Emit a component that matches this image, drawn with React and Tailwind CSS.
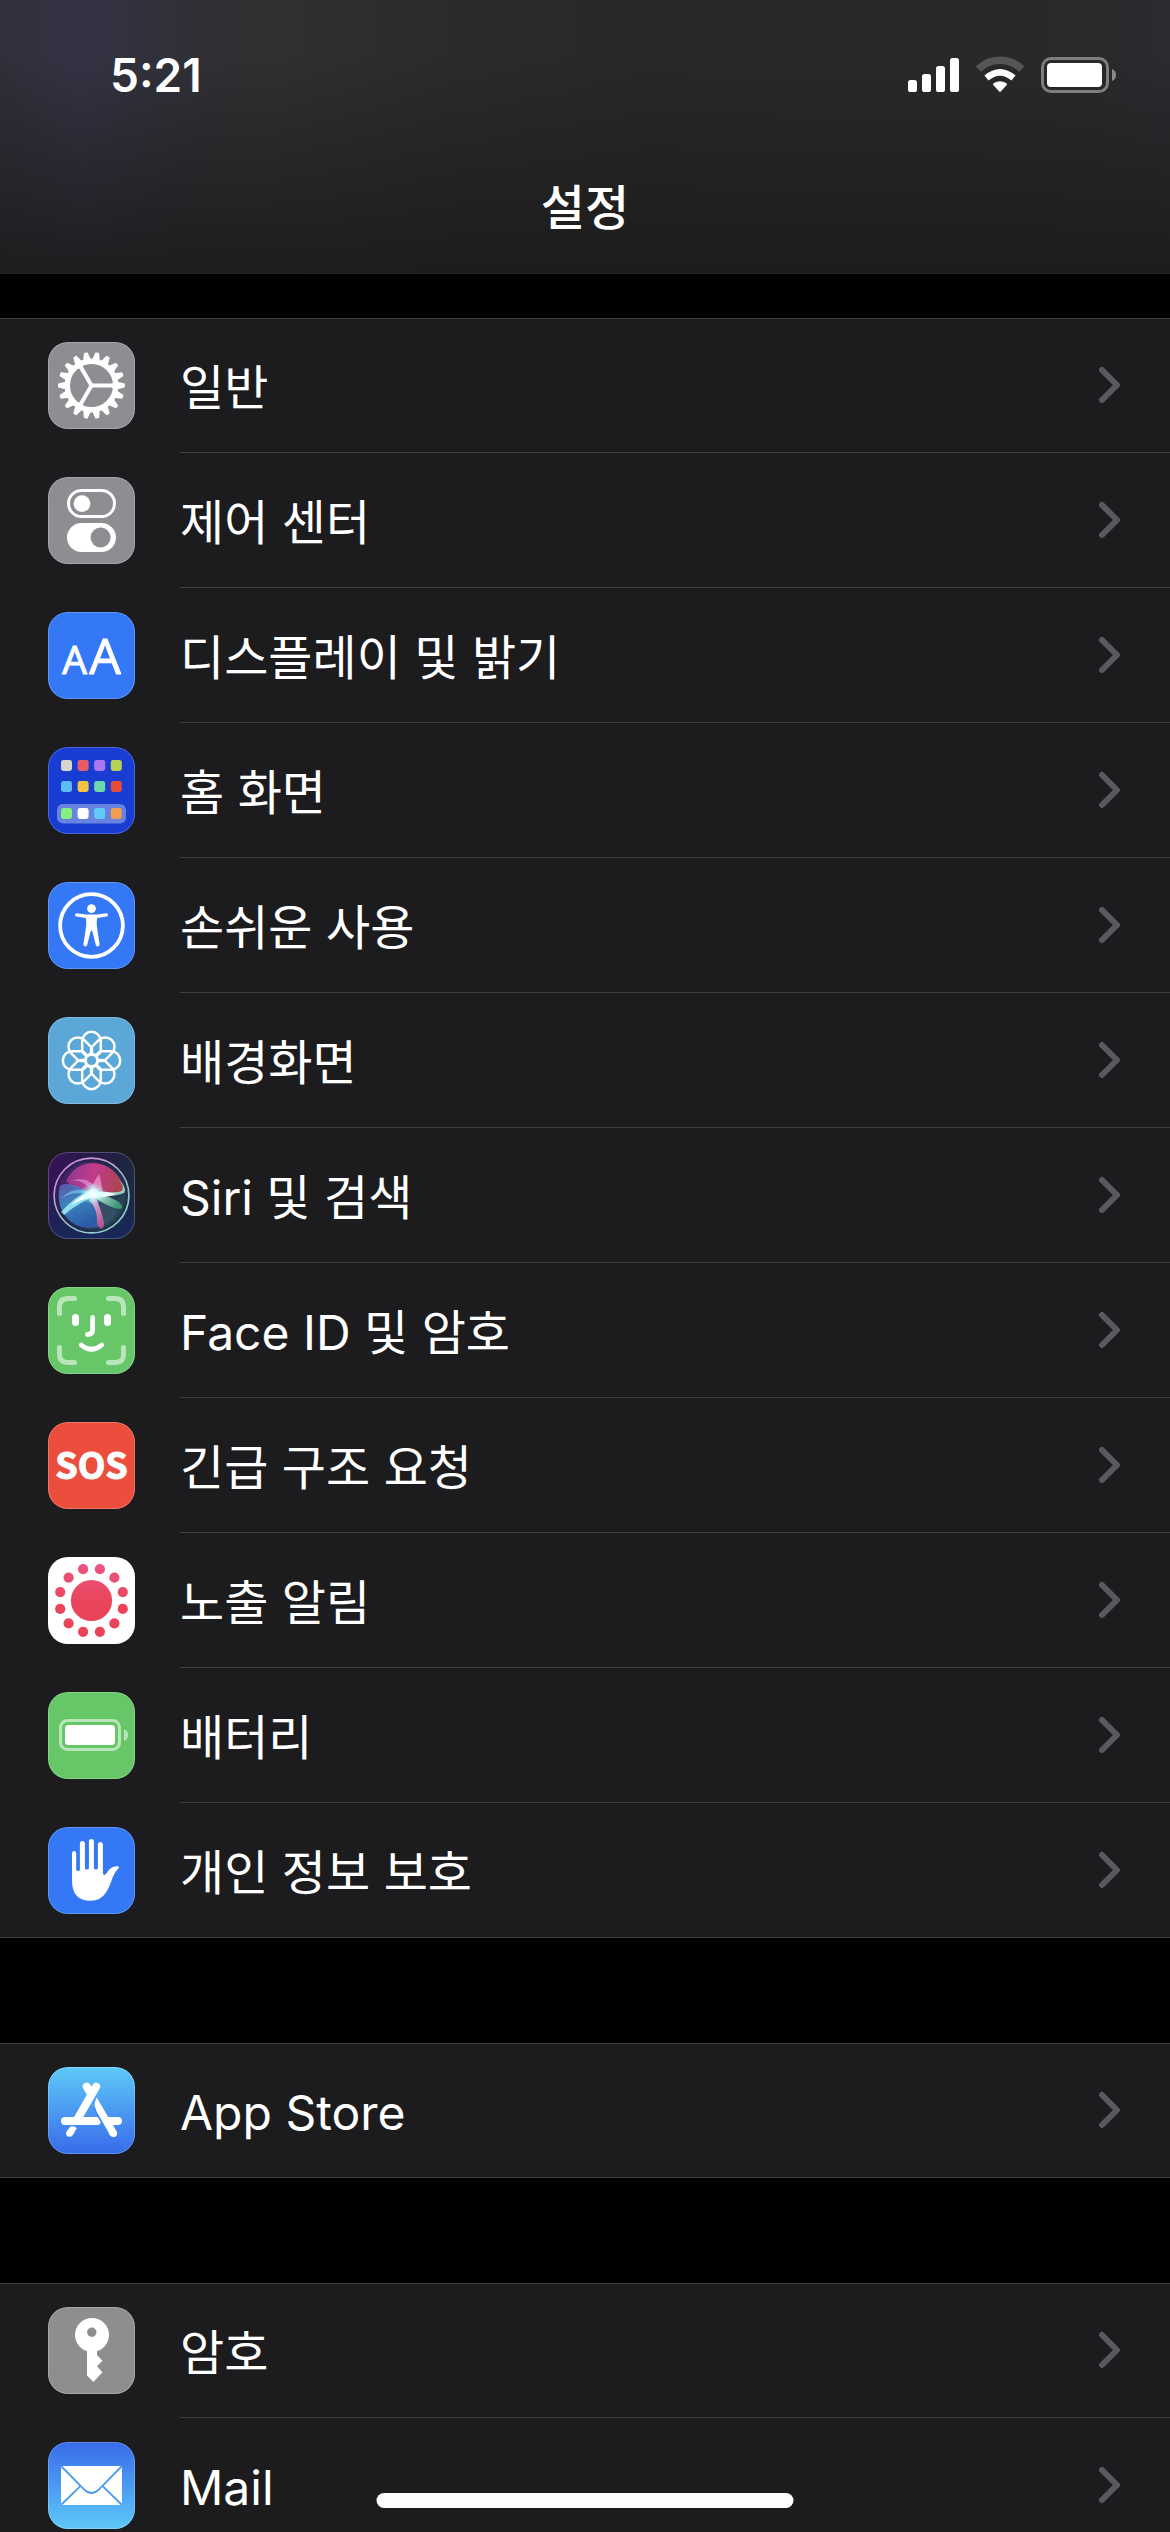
import { useId } from 'react'

// ── Icon artwork (all drawn on an 87 × 87 tile) ────────────────────────────

const TEETH = Array.from({ length: 18 }, (_, i) => i * 20)
const PETALS = Array.from({ length: 8 }, (_, i) => i * 45)
const DOTS = Array.from({ length: 12 }, (_, i) => 15 + i * 30)

function Tile({ from, to = from, children }) {
  const id = useId()
  return (
    <svg viewBox="0 0 87 87" className="size-[87px] shrink-0" aria-hidden="true">
      <defs>
        <linearGradient id={id} x1="0" y1="0" x2="0" y2="1">
          <stop offset="0" stopColor={from} />
          <stop offset="1" stopColor={to} />
        </linearGradient>
      </defs>
      <rect width="87" height="87" rx="20" fill={`url(#${id})`} />
      {children}
      <rect x="0.5" y="0.5" width="86" height="86" rx="19.5" fill="none" stroke="#fff" strokeOpacity="0.22" />
    </svg>
  )
}

function GeneralIcon() {
  return (
    <Tile from="#8e8d92">
      <g transform="translate(43.5 43.5)">
        <circle r="24.2" fill="none" stroke="#fff" strokeWidth="5.4" />
        {TEETH.map(a => (
          <path key={a} d="M25-4L33.2-1.9Q33.8 0 33.2 1.9L25 4z" fill="#fff" transform={`rotate(${a})`} />
        ))}
        {[0, 120, 240].map(a => (
          <path key={a} d="M-2-2H20Q22-2.4 24-5V5Q22 2.4 20 2H-1z" fill="#fff" transform={`rotate(${a})`} />
        ))}
      </g>
    </Tile>
  )
}

function ControlCenterIcon() {
  return (
    <Tile from="#8e8d92">
      <rect x="20.5" y="13.5" width="46" height="26" rx="13" fill="none" stroke="#fff" strokeWidth="3" />
      <circle cx="34" cy="26.6" r="8.4" fill="#fff" />
      <rect x="19" y="46" width="49" height="29" rx="14.5" fill="#fff" />
      <circle cx="52.6" cy="60.5" r="10" fill="#8e8d92" />
    </Tile>
  )
}

function DisplayIcon() {
  return (
    <Tile from="#3478f6">
      <g
        fill="#fff"
        stroke="#fff"
        strokeWidth="1"
        strokeLinejoin="round"
        fontFamily="'Open Sans', sans-serif"
        textAnchor="middle"
      >
        <text x="26.5" y="61.5" fontSize="39">A</text>
        <text x="57" y="61.5" fontSize="50">A</text>
      </g>
    </Tile>
  )
}

function HomeScreenIcon() {
  const rows = [
    [13, ['#d6d6ce', '#ea5b68', '#ad76f3', '#b8d353']],
    [34, ['#5dbcf7', '#f6c445', '#70d6ab', '#e54c3c']],
    [61, ['#89ef82', '#ffffff', '#60cafa', '#f09e54']],
  ]
  return (
    <Tile from="#193dd3">
      <rect x="9" y="57" width="69" height="19.5" rx="6" fill="#6683e0" />
      {rows.map(([y, colors]) =>
        colors.map((c, i) => <rect key={c} x={13 + i * 16.6} y={y} width="11" height="11" rx="2.4" fill={c} />)
      )}
    </Tile>
  )
}

function AccessibilityIcon() {
  return (
    <Tile from="#3478f6">
      <circle cx="43.5" cy="43.5" r="31.4" fill="none" stroke="#fff" strokeWidth="3.8" />
      <circle cx="43.5" cy="26.6" r="4.4" fill="#fff" />
      <path
        d="M28.6 31.2L38 32.6H49L58.4 31.2Q60 31.4 60 33Q60 34.2 58.6 34.5L49.2 36Q48.6 38 48.8 43Q49.2 48 51.6 62Q51.8 64 50 64.4Q48.4 64.6 47.8 63L44.4 49.5Q43.5 47.5 42.6 49.5L39.2 63Q38.6 64.6 37 64.4Q35.2 64 35.4 62Q37.8 48 38.2 43Q38.4 38 37.8 36L28.4 34.5Q27 34.2 27 33Q27 31.4 28.6 31.2z"
        fill="#fff"
      />
    </Tile>
  )
}

function WallpaperIcon() {
  return (
    <Tile from="#5ba8d8">
      <g transform="translate(43.5 43.5)" fill="none" stroke="#fff" strokeWidth="2.5">
        {PETALS.map(a => (
          <path key={a} d="M0 0L-9.3-9.5V-19.4A9.3 9.3 0 0 1 9.3-19.4V-9.5z" transform={`rotate(${a})`} />
        ))}
        {PETALS.map(a => (
          <path key={a} d="M0-5V-12" strokeWidth="3.4" transform={`rotate(${a})`} />
        ))}
        <circle r="6.2" strokeWidth="3" />
        <circle r="4.6" fill="#5ba8d8" stroke="none" />
      </g>
    </Tile>
  )
}

function SiriIcon() {
  const id = useId()
  const ref = name => `url(#${id}${name})`
  return (
    <svg viewBox="0 0 87 87" className="size-[87px] shrink-0" aria-hidden="true">
      <defs>
        <linearGradient id={`${id}bg`} x1="0" y1="0" x2="1" y2="0.25">
          <stop offset="0" stopColor="#38125a" />
          <stop offset="0.55" stopColor="#251b45" />
          <stop offset="1" stopColor="#1c2940" />
        </linearGradient>
        <linearGradient id={`${id}low`} x1="0" y1="0" x2="0" y2="1">
          <stop offset="0.4" stopColor="#18245c" stopOpacity="0" />
          <stop offset="1" stopColor="#18285a" />
        </linearGradient>
        <linearGradient id={`${id}ring`} x1="0.2" y1="0" x2="0.8" y2="1">
          <stop offset="0" stopColor="#d08ad6" />
          <stop offset="0.5" stopColor="#a3b8c8" />
          <stop offset="1" stopColor="#8fdad0" />
        </linearGradient>
        <linearGradient id={`${id}glass`} x1="0" y1="0.1" x2="1" y2="0.8">
          <stop offset="0" stopColor="#5a2272" />
          <stop offset="0.5" stopColor="#2b3560" />
          <stop offset="1" stopColor="#2c5a55" />
        </linearGradient>
        <linearGradient id={`${id}dome`} x1="0" y1="0.3" x2="1" y2="0.5">
          <stop offset="0" stopColor="#8f3a94" />
          <stop offset="0.45" stopColor="#cf3c8e" />
          <stop offset="1" stopColor="#b5464e" />
        </linearGradient>
        <linearGradient id={`${id}blue`} x1="0.2" y1="0" x2="0.6" y2="1">
          <stop offset="0" stopColor="#5d62b8" />
          <stop offset="0.4" stopColor="#3f93cf" />
          <stop offset="1" stopColor="#2c5fb4" />
        </linearGradient>
        <radialGradient id={`${id}glow`} cx="0.5" cy="0.5" r="0.5">
          <stop offset="0" stopColor="#fff" />
          <stop offset="0.35" stopColor="#dffcff" stopOpacity="0.85" />
          <stop offset="1" stopColor="#8fe" stopOpacity="0" />
        </radialGradient>
        <linearGradient id={`${id}green`} x1="0" y1="0" x2="1" y2="0.4">
          <stop offset="0" stopColor="#d8fff4" />
          <stop offset="1" stopColor="#3f9c78" />
        </linearGradient>
        <linearGradient id={`${id}tail`} x1="0" y1="0" x2="0.3" y2="1">
          <stop offset="0" stopColor="#ffe6fa" />
          <stop offset="1" stopColor="#d0549e" />
        </linearGradient>
      </defs>
      <rect width="87" height="87" rx="20" fill={ref('bg')} />
      <rect width="87" height="87" rx="20" fill={ref('low')} />
      <circle cx="43.5" cy="43.5" r="37.6" fill={ref('glass')} fillOpacity="0.75" />
      <path d="M18 29Q27 11 45 11Q64 12 73 29Q78 38 73 41L46 43Q29 40 18 29z" fill={ref('dome')} fillOpacity="0.92" />
      <path d="M12 34Q20 27 44 42Q51 58 50 75Q30 79 18 65Q8 52 12 34z" fill={ref('blue')} fillOpacity="0.85" />
      <path d="M46 43L72 50Q68 70 51 74Q52 58 46 43z" fill="#4a6b80" fillOpacity="0.35" />
      <path d="M46 41Q34 25 20 29Q30 26 38 28Q47 32 50 39z" fill="#e9b4ff" fillOpacity="0.5" />
      <path d="M44 43Q24 38 13 47Q25 32 46 41z" fill="#8fe0ff" fillOpacity="0.5" />
      <path d="M39 45Q44 32 51 22Q55 34 54 46z" fill="#f7a9e4" fillOpacity="0.6" />
      <path d="M48 38Q66 42 74 39Q77 34 70 27Q80 36 76 41Q64 46 48 43z" fill="#a8f0dc" fillOpacity="0.8" />
      <path d="M48 41Q62 44 72 51Q76 56 72 57Q64 57 47 46z" fill={ref('green')} fillOpacity="0.9" />
      <path d="M47 44Q53 56 56 71Q56 77 53 77Q48 74 49 65Q48 55 41 48z" fill={ref('tail')} fillOpacity="0.85" />
      <path d="M13 60Q26 45 45 36L52 43Q32 49 16 63z" fill="#9df0f4" fillOpacity="0.85" />
      <path d="M23 53Q33 43 46 37L52 43Q34 47 23 53z" fill="#fff" />
      <path d="M43 40Q58 39 68 42Q56 46 44 46z" fill="#fff" fillOpacity="0.9" />
      <ellipse cx="45" cy="41.5" rx="13" ry="11" fill={ref('glow')} />
      <circle cx="43.5" cy="43.5" r="35.2" fill="none" stroke="#161a3c" strokeOpacity="0.4" strokeWidth="2.6" />
      <circle cx="43.5" cy="43.5" r="37.4" fill="none" stroke={ref('ring')} strokeWidth="1.6" />
      <rect x="0.5" y="0.5" width="86" height="86" rx="19.5" fill="none" stroke="#fff" strokeOpacity="0.22" />
    </svg>
  )
}

function FaceIdIcon() {
  return (
    <Tile from="#67c667">
      <g fill="none" strokeLinecap="round" strokeLinejoin="round" strokeWidth="5">
        <path
          d="M11.5 26.5V20Q11.5 11.5 20 11.5H26.5M60.5 11.5H67Q75.5 11.5 75.5 20V26.5M75.5 60.5V67Q75.5 75.5 67 75.5H60.5M26.5 75.5H20Q11.5 75.5 11.5 67V60.5"
          stroke="#b9e5bb"
        />
        <path d="M44.6 30.5V43Q44.6 47.5 39.5 47.5" stroke="#fff" strokeWidth="4.8" />
        <path d="M33.2 58Q43.5 66.6 53.8 58" stroke="#fff" strokeWidth="4.8" />
      </g>
      <rect x="24" y="27" width="7" height="12" rx="3.5" fill="#fff" />
      <rect x="56" y="27" width="7" height="12" rx="3.5" fill="#fff" />
    </Tile>
  )
}

function SosIcon() {
  return (
    <Tile from="#eb4e3d">
      <text
        x="43.5"
        y="57"
        fontSize="36"
        fontWeight="700"
        fontFamily="'Noto Sans CJK KR', sans-serif"
        textAnchor="middle"
        fill="#fff"
        stroke="#fff"
        strokeWidth="1"
      >
        SOS
      </text>
    </Tile>
  )
}

function ExposureIcon() {
  const id = useId()
  return (
    <Tile from="#ffffff">
      <defs>
        <linearGradient id={id} gradientUnits="userSpaceOnUse" x1="0" y1="8" x2="0" y2="48">
          <stop offset="0" stopColor="#ea547f" />
          <stop offset="1" stopColor="#ea4459" />
        </linearGradient>
      </defs>
      <g fill={`url(#${id})`}>
        <circle cx="43.5" cy="43.5" r="20.6" />
        {DOTS.map(a => {
          const rad = (a * Math.PI) / 180
          return <circle key={a} cx={43.5 + 32.4 * Math.cos(rad)} cy={43.5 + 32.4 * Math.sin(rad)} r="5.1" />
        })}
      </g>
    </Tile>
  )
}

function BatteryIcon() {
  return (
    <Tile from="#67c667">
      <rect x="12.5" y="28.5" width="59" height="29" rx="7" fill="none" stroke="#b9e5bb" strokeWidth="3" />
      <rect x="17" y="33" width="50" height="20" rx="3.5" fill="#fff" />
      <path d="M76 37Q80 38.5 80 43T76 49z" fill="#b9e5bb" />
    </Tile>
  )
}

function PrivacyIcon() {
  return (
    <Tile from="#3478f6">
      <path
        d="M24 26.2A2.1 2.1 0 0 1 28.2 26.2V42.5Q28.2 44 30 44T31.9 42.5V16.6A2.5 2.5 0 0 1 36.9 16.6V41Q36.9 42.6 38.9 42.6T40.9 41V14.6A2.5 2.5 0 0 1 45.9 14.6V41Q45.9 42.6 47.9 42.6T49.9 41V17.5A2.5 2.5 0 0 1 54.9 17.5V46Q55.2 48.6 57.4 47.6Q58.6 46.6 60 44Q63.6 38.8 70 39.2Q71.8 39.6 70.6 41.2Q67.4 44 64.4 51Q61.6 60 58 65.5Q52.6 73.8 42.5 73.8Q24 73.8 24 53.5z"
        fill="#fff"
      />
    </Tile>
  )
}

function AppStoreIcon() {
  return (
    <Tile from="#5ec9f8" to="#386bea">
      <g stroke="#fff" strokeWidth="8" strokeLinecap="round" fill="none">
        <path d="M38.8 19.6L43 27" />
        <path d="M48.2 19.6L29.8 51.5" />
        <path d="M17 54H49" />
        <path d="M60 54H70" />
      </g>
      <path d="M48.8 30.6L69 65Q69.8 68.6 66.6 70Q63.4 70.6 61.6 68L47.6 43.6Q45.2 37.4 48.8 30.6z" fill="#fff" />
      <path d="M46.6 40.6Q47 43.4 48.4 46L60.5 67" fill="none" stroke="#448bf0" strokeWidth="1.6" />
      <path d="M22.4 59.6Q25.6 58.2 28.9 61L24.9 68Q22.9 70.8 19.7 69.4Q17 67.6 18.6 64.6z" fill="#fff" />
    </Tile>
  )
}

function PasswordsIcon() {
  return (
    <Tile from="#8e8e90">
      <circle cx="44" cy="28" r="17" fill="#fff" />
      <path d="M39 40H49V48L54.4 53.7L49 59.3L54.4 65.2L45.4 75L39 68.6z" fill="#fff" />
      <circle cx="43.8" cy="25.2" r="4.7" fill="#8e8e90" />
    </Tile>
  )
}

function MailIcon() {
  return (
    <Tile from="#386bea" to="#5ec9f8">
      <rect x="13" y="24" width="61" height="39" rx="1.5" fill="#fff" />
      <g fill="none" stroke="#4c9bf2" strokeWidth="1.8">
        <path d="M13.5 24.5L36 47.4Q43.5 54.6 51 47.4L73.5 24.5" />
        <path d="M13.5 62.5L32.6 43.8M73.5 62.5L54.4 43.8" />
      </g>
    </Tile>
  )
}

// ── Status bar ─────────────────────────────────────────────────────────────

function StatusIcons() {
  return (
    <svg viewBox="0 0 210 38" className="h-[38px] w-[210px]" role="img" aria-label="Signal, Wi-Fi, battery">
      <g fill="#fff">
        <rect x="2" y="24" width="9" height="12" rx="2.6" />
        <rect x="16" y="18" width="9" height="18" rx="2.6" />
        <rect x="30" y="10" width="9" height="26" rx="2.6" />
        <rect x="44" y="2" width="9" height="34" rx="2.6" />
        <path d="M94 36.2L87 28.8Q87 27.4 88.4 26.8Q94 23.6 99.6 26.8Q101 27.4 101 28.8z" />
        <path d="M78.4 19.6Q86 13 94 13T109.6 19.6L105.4 24.6Q99.8 19.8 94 19.8T82.6 24.6z" />
      </g>
      <path d="M69.6 10.6Q80 0.4 94 0.4T118.4 10.6L113.2 15.8Q105 8 94 8T75 15.8z" fill="#555" />
      <rect x="136.5" y="2.5" width="65" height="33" rx="8.5" fill="none" stroke="#7e7e7e" strokeWidth="3" />
      <rect x="141" y="7" width="55" height="24" rx="4" fill="#fff" />
      <path d="M206 13Q210 14.5 210 19T206 25z" fill="#8a8a8a" />
    </svg>
  )
}

function Header() {
  return (
    <header className="shrink-0 border-b border-[#262626] bg-[linear-gradient(to_bottom,transparent_20%,#1b1b1be6_100%),linear-gradient(to_right,#302f3a_0%,#343345_7%,#303038_15%,#303030_23%,#2b2b2b_38%,#282828_55%,#292929_90%,#2b2b30_100%)]">
      <div className="flex h-[150px] items-center justify-between pr-[54px] pl-[110px]">
        <time className="text-[46px] leading-none font-semibold">5:21</time>
        <StatusIcons />
      </div>
      <h1 className="flex h-[123px] items-center justify-center pb-2 text-5xl leading-none font-medium">설정</h1>
    </header>
  )
}

// ── Settings list ──────────────────────────────────────────────────────────

const groups = [
  [
    { label: '일반', Icon: GeneralIcon },
    { label: '제어 센터', Icon: ControlCenterIcon },
    { label: '디스플레이 및 밝기', Icon: DisplayIcon },
    { label: '홈 화면', Icon: HomeScreenIcon },
    { label: '손쉬운 사용', Icon: AccessibilityIcon },
    { label: '배경화면', Icon: WallpaperIcon },
    { label: 'Siri 및 검색', Icon: SiriIcon },
    { label: 'Face ID 및 암호', Icon: FaceIdIcon },
    { label: '긴급 구조 요청', Icon: SosIcon },
    { label: '노출 알림', Icon: ExposureIcon },
    { label: '배터리', Icon: BatteryIcon },
    { label: '개인 정보 보호', Icon: PrivacyIcon },
  ],
  [{ label: 'App Store', Icon: AppStoreIcon }],
  [
    { label: '암호', Icon: PasswordsIcon },
    { label: 'Mail', Icon: MailIcon },
  ],
]

function Row({ label, Icon }) {
  return (
    <li>
      <a href="#" className="flex h-[135px] items-center gap-[45px] pl-12">
        <Icon />
        <span className="flex h-full min-w-0 flex-1 items-center justify-between border-b border-[#3d3d40] pr-12">
          <span className="truncate pt-1.5 text-5xl leading-[72px]">{label}</span>
          <svg viewBox="0 0 24 38" className="h-[38px] w-6 shrink-0" aria-hidden="true">
            <path d="M4 4L19 19L4 34" fill="none" stroke="#5a5a5e" strokeWidth="6" strokeLinecap="round" strokeLinejoin="round" />
          </svg>
        </span>
      </a>
    </li>
  )
}

export default function App() {
  return (
    <div className="relative flex h-screen flex-col overflow-hidden bg-black font-[Inter,'Noto_Sans_CJK_KR',sans-serif] text-white" lang="ko">
      <Header />
      <main className="flex min-h-0 flex-1 flex-col gap-[105px] overflow-y-auto pt-11 [scrollbar-width:none]">
        {groups.map((rows, i) => (
          // top and bottom hairlines are inset so they don't add to the row height
          <ul key={i} className="shrink-0 bg-[#1c1c1e] shadow-[inset_0_1px_0_#3d3d40,inset_0_-1px_0_#3d3d40]">
            {rows.map(row => <Row key={row.label} {...row} />)}
          </ul>
        ))}
      </main>
      <div className="absolute bottom-6 left-1/2 h-[15px] w-[417px] -translate-x-1/2 rounded-full bg-white" />
    </div>
  )
}
